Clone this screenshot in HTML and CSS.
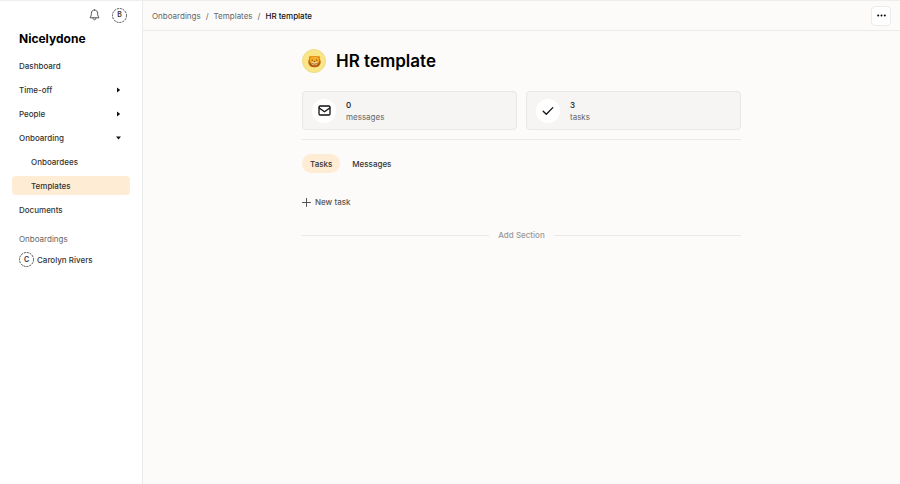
FILE: index.html
```html
<!DOCTYPE html>
<html lang="en">
<head>
    <meta charset="UTF-8">
    <meta name="viewport" content="width=device-width, initial-scale=1.0">
    <title>HR template - Nicelydone</title>
    <link rel="stylesheet" href="styles.css">
</head>
<body>
    <aside class="sidebar">
        <div class="sidebar-top">
            <button class="icon-btn" type="button" aria-label="Notifications">
                <svg width="11" height="12" viewBox="0 0 11 12" fill="none" stroke="#444" stroke-width="0.9" stroke-linejoin="round" stroke-linecap="round">
                    <path d="M5.5 1C3.6 1 2.4 2.4 2.4 4.2C2.4 6.8 1.6 7.7 1 8.8H10C9.4 7.7 8.6 6.8 8.6 4.2C8.6 2.4 7.4 1 5.5 1Z"/>
                    <path d="M4.1 9.1C4.1 10.2 4.7 10.8 5.5 10.8C6.3 10.8 6.9 10.2 6.9 9.1"/>
                </svg>
            </button>
            <button class="avatar" type="button">
                <svg class="ring" viewBox="0 0 15 15"><circle cx="7.5" cy="7.5" r="7"/></svg>
                <span>B</span>
            </button>
        </div>
        <h2 class="brand">Nicelydone</h2>
        <nav class="nav">
            <a class="nav-item" href="#">Dashboard</a>
            <a class="nav-item" href="#">Time-off
                <svg width="5" height="6" viewBox="0 0 5 6"><path d="M1 0.4L4.2 3L1 5.6Z"/></svg>
            </a>
            <a class="nav-item" href="#">People
                <svg width="5" height="6" viewBox="0 0 5 6"><path d="M1 0.4L4.2 3L1 5.6Z"/></svg>
            </a>
            <a class="nav-item" href="#">Onboarding
                <svg width="5" height="4" viewBox="0 0 5 4"><path d="M0 0.5H5L2.5 3.5Z"/></svg>
            </a>
            <a class="nav-item sub" href="#">Onboardees</a>
            <a class="nav-item sub active" href="#">Templates</a>
            <a class="nav-item" href="#">Documents</a>
        </nav>
        <h3 class="group-title">Onboardings</h3>
        <a class="person" href="#">
            <span class="avatar">
                <svg class="ring" viewBox="0 0 15 15"><circle cx="7.5" cy="7.5" r="7"/></svg>
                <span>C</span>
            </span>
            Carolyn Rivers
        </a>
    </aside>

    <main class="main">
        <header class="topbar">
            <nav class="breadcrumb">
                <a href="#">Onboardings</a>
                <span>/</span>
                <a href="#">Templates</a>
                <span>/</span>
                <a class="current" href="#">HR template</a>
            </nav>
            <button class="more-btn" type="button" aria-label="More">
                <svg width="9" height="3" viewBox="0 0 9 3"><circle cx="1.2" cy="1.5" r="1"/><circle cx="4.5" cy="1.5" r="1"/><circle cx="7.8" cy="1.5" r="1"/></svg>
            </button>
        </header>

        <div class="content">
            <div class="title-row">
                <span class="emoji">
                    <!-- lion face -->
                    <svg width="13" height="13" viewBox="0 0 12 12">
                        <circle cx="2.3" cy="2" r="1.4" fill="#e39a20"/>
                        <circle cx="9.7" cy="2" r="1.4" fill="#e39a20"/>
                        <path d="M6 0.9C9.4 0.9 11.8 3.4 11.7 6.6C11.4 9.8 9 11.4 6 11.4C3 11.4 0.6 9.8 0.3 6.6C0.2 3.4 2.6 0.9 6 0.9Z" fill="#b85f16"/>
                        <path d="M6 1.2C9.2 1.2 10.7 2.8 10.5 5.2C10.2 7.2 8.8 8 6 8C3.2 8 1.8 7.2 1.5 5.2C1.3 2.8 2.8 1.2 6 1.2Z" fill="#f5ae25"/>
                        <ellipse cx="6" cy="7.7" rx="2.7" ry="1.8" fill="#fbdc86"/>
                        <circle cx="3.9" cy="4.7" r="0.6" fill="#5b3010"/>
                        <circle cx="8.1" cy="4.7" r="0.6" fill="#5b3010"/>
                        <path d="M5 5.8H7L6 7Z" fill="#5b3010"/>
                        <path d="M3.9 7.8Q6 9.4 8.1 7.8" fill="none" stroke="#7a3b12" stroke-width="0.7"/>
                    </svg>
                </span>
                <h1>HR template</h1>
            </div>

            <div class="stats">
                <div class="stat">
                    <span class="stat-icon">
                        <svg width="13" height="11" viewBox="0 0 13 11" fill="none" stroke="#111" stroke-width="1.3" stroke-linejoin="round" stroke-linecap="round">
                            <rect x="1" y="1" width="11" height="9" rx="1.2"/>
                            <path d="M1.2 3L6.5 6.8L11.8 3"/>
                        </svg>
                    </span>
                    <div>
                        <div class="stat-value">0</div>
                        <div class="stat-label">messages</div>
                    </div>
                </div>
                <div class="stat">
                    <span class="stat-icon">
                        <svg width="12" height="10" viewBox="0 0 12 10" fill="none" stroke="#111" stroke-width="1.3" stroke-linecap="round" stroke-linejoin="round">
                            <path d="M1.2 5.2L4.3 8.3L10.8 1.6"/>
                        </svg>
                    </span>
                    <div>
                        <div class="stat-value">3</div>
                        <div class="stat-label">tasks</div>
                    </div>
                </div>
            </div>

            <div class="tabs">
                <button class="tab active" type="button">Tasks</button>
                <button class="tab" type="button">Messages</button>
            </div>

            <button class="new-task" type="button">
                <svg width="9" height="9" viewBox="0 0 9 9"><path d="M4.5 0.5V8.5M0.5 4.5H8.5" fill="none" stroke="#555" stroke-linecap="round"/></svg>
                New task
            </button>

            <div class="add-section">
                <button type="button">Add Section</button>
            </div>
        </div>
    </main>
</body>
</html>
```
FILE: styles.css
```css
* {
    box-sizing: border-box;
}

body {
    margin: 0;
    display: flex;
    min-height: 100vh;
    font-family: Inter, sans-serif;
    font-size: 8px;
    font-weight: 500;
    line-height: 12px;
    color: #333;
    background-color: #fcfbf9;
    border-top: 1px solid #eeeeed;
}

a {
    color: inherit;
    text-decoration: none;
}

button {
    font: inherit;
    color: inherit;
    background: none;
    border: none;
    padding: 0;
    cursor: pointer;
}

h1, h2, h3 {
    margin: 0;
}

.sidebar {
    flex: 0 0 143px;
    padding: 6px 12px;
    background-color: #fff;
    border-right: 1px solid #ebebea;
}

.sidebar-top {
    display: flex;
    justify-content: flex-end;
    align-items: center;
    gap: 12px;
    height: 16px;
    padding-right: 3px;
}

.icon-btn {
    display: flex;
}

.avatar {
    position: relative;
    display: flex;
    align-items: center;
    justify-content: center;
    width: 15px;
    height: 15px;
    font-size: 7px;
    font-weight: 600;
    color: #333;
}

.ring {
    position: absolute;
    inset: 0;
    fill: none;
    stroke: #444;
    stroke-dasharray: 2 1;
}

.brand {
    margin-top: 8px;
    padding-left: 7px;
    font-size: 12px;
    font-weight: 700;
    line-height: 16px;
    color: #000;
}

.nav {
    display: flex;
    flex-direction: column;
    gap: 5px;
    margin-top: 9px;
}

.nav-item {
    display: flex;
    align-items: center;
    justify-content: space-between;
    height: 19px;
    padding: 0 9px 0 7px;
    border-radius: 4px;
}

.nav-item svg {
    fill: #111;
}

.nav-item.sub {
    padding-left: 19px;
}

.nav-item.active {
    background-color: #ffecd5;
}

.group-title {
    margin-top: 14px;
    padding-left: 7px;
    font-size: 8px;
    font-weight: 400;
    color: #666;
}

.person {
    display: flex;
    align-items: center;
    gap: 3px;
    margin-top: 7px;
    padding-left: 7px;
}

.main {
    flex: 1;
    min-width: 0;
}

.topbar {
    display: flex;
    align-items: center;
    justify-content: space-between;
    height: 30px;
    padding: 0 9px;
    border-bottom: 1px solid #ebebea;
}

.breadcrumb {
    display: flex;
    gap: 5px;
    font-weight: 400;
    color: #666;
}

.breadcrumb .current {
    font-weight: 500;
    color: #111;
}

.more-btn {
    display: flex;
    align-items: center;
    justify-content: center;
    width: 20px;
    height: 20px;
    background-color: #fff;
    border: 1px solid #ebebea;
    border-radius: 4px;
}

.content {
    max-width: 439px;
    margin: 0 auto;
    padding-top: 18px;
}

.title-row {
    display: flex;
    align-items: center;
    gap: 10px;
}

.emoji {
    display: flex;
    align-items: center;
    justify-content: center;
    width: 24px;
    height: 24px;
    background-color: #fbe687;
    border: 1px solid #eddc8b;
    border-radius: 50%;
}

h1 {
    font-size: 17px;
    font-weight: 600;
    line-height: 24px;
    color: #000;
}

.stats {
    display: grid;
    grid-template-columns: 1fr 1fr;
    gap: 9px;
    margin-top: 18px;
    padding-bottom: 9px;
    border-bottom: 1px solid #e9e9e7;
}

.stat {
    display: flex;
    align-items: center;
    gap: 10px;
    height: 39px;
    padding: 0 9px;
    background-color: #f6f5f3;
    border: 1px solid #e8e7e5;
    border-radius: 4px;
}

.stat-icon {
    display: flex;
    align-items: center;
    justify-content: center;
    width: 24px;
    height: 24px;
    background-color: #fff;
    border-radius: 50%;
}

.stat-value {
    color: #111;
}

.stat-label {
    font-weight: 400;
    color: #666;
}

.tabs {
    display: flex;
    gap: 4px;
    margin-top: 14px;
}

.tab {
    height: 19px;
    padding: 0 8px;
    border-radius: 10px;
}

.tab.active {
    background-color: #ffecd5;
}

.new-task {
    display: flex;
    align-items: center;
    gap: 4px;
    margin-top: 23px;
    color: #555;
}

.add-section {
    display: flex;
    align-items: center;
    gap: 9px;
    margin-top: 21px;
    color: #999;
}

.add-section::before,
.add-section::after {
    content: "";
    flex: 1;
    height: 1px;
    background-color: #e9e9e7;
}
```
